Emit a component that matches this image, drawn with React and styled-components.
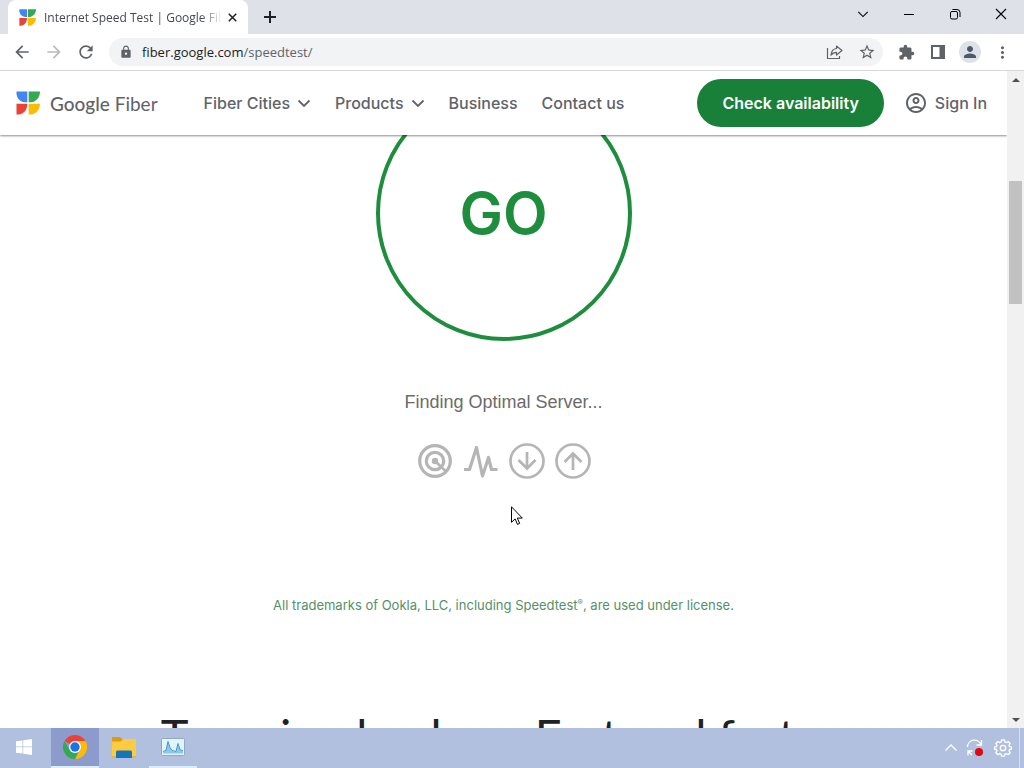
import React from "react";
import styled, { createGlobalStyle, css } from "styled-components";
import {
  MdArrowBack,
  MdArrowForward,
  MdRefresh,
  MdLock,
  MdStarBorder,
  MdExtension,
  MdMoreVert,
  MdPerson,
  MdOutlineAccountCircle,
} from "react-icons/md";

const FiberLogo = ({ size }) => (
  <svg width={size} height={size} viewBox="0 0 24 24" aria-hidden="true">
    <path fill="#4285f4" d="M.5.5h10.800v10.800H8.500C3.500 10.500 1 7 .5 3z" />
    <path fill="#34a853" d="M12.700.5H24c0 5.500-3.500 10.300-9 10.800h-2.300z" />
    <path fill="#ea4335" d="M.5 12.700h10.800c0 6-3.500 10.300-8.800 10.800h-2z" />
    <path fill="#fbbc04" d="M12.700 12.700H24c-.3 6-3.800 10.300-9.300 10.800h-2z" />
  </svg>
);

const ChevronIcon = ({ size = 14, stroke = 1.8 }) => (
  <svg width={size} height={size} viewBox="0 0 14 14" fill="none" stroke="currentColor" strokeWidth={stroke} aria-hidden="true">
    <path d="M1.500 4.500 7 10l5.500-5.500" />
  </svg>
);

const CloseIcon = ({ size, stroke }) => (
  <svg width={size} height={size} viewBox="0 0 12 12" fill="none" stroke="currentColor" strokeWidth={stroke} aria-hidden="true">
    <path d="M1 1l10 10M11 1 1 11" />
  </svg>
);

const PlusIcon = () => (
  <svg width="12" height="12" viewBox="0 0 12 12" fill="none" stroke="currentColor" strokeWidth="2" aria-hidden="true">
    <path d="M6 0v12M0 6h12" />
  </svg>
);

const MinimizeIcon = () => (
  <svg width="12" height="12" viewBox="0 0 12 12" stroke="currentColor" aria-hidden="true">
    <path d="M1 6.500h10" />
  </svg>
);

const RestoreIcon = () => (
  <svg width="12" height="12" viewBox="0 0 12 12" fill="none" stroke="currentColor" aria-hidden="true">
    <rect x="1.500" y="3.500" width="7" height="7.500" rx="1.500" />
    <path d="M3.500 1.500H8a3 3 0 0 1 3 3v4.500" />
  </svg>
);

const ShareIcon = () => (
  <svg width="18" height="18" viewBox="0 0 18 18" fill="none" stroke="currentColor" strokeWidth="1.200" aria-hidden="true">
    <path d="M1.500 5v10.500h12V13" />
    <path strokeLinejoin="round" d="M10.500 3 16 7.500 10.500 12V9.400C7.800 9.400 6.200 10.300 5 12.200c.3-3.600 2-6.300 5.500-6.700z" />
  </svg>
);

const SidePanelIcon = () => (
  <svg width="16" height="16" viewBox="0 0 16 16" aria-hidden="true">
    <path fill="currentColor" fillRule="evenodd" d="M1 1h14v14H1zM3 3v10h6.500V3z" />
  </svg>
);

const ServerIcon = () => (
  <svg width="36" height="36" viewBox="0 0 36 36" fill="none" stroke="currentColor" aria-hidden="true">
    <circle cx="18" cy="18" r="15.300" strokeWidth="3.200" />
    <circle cx="18" cy="18" r="8.700" strokeWidth="3.200" />
    <circle cx="18" cy="18" r="3.200" fill="currentColor" stroke="none" />
    <path d="M18 18l11 10.500" strokeWidth="2.600" />
  </svg>
);

const PingIcon = () => (
  <svg width="36" height="36" viewBox="0 0 36 36" fill="none" stroke="currentColor" strokeWidth="3.200" strokeLinejoin="round" aria-hidden="true">
    <path d="M1 26.500h5.500L13.500 4.500l6 28.500 6-18.500 3 12h6" />
  </svg>
);

const TransferIcon = ({ up }) => (
  <svg width="36" height="36" viewBox="0 0 36 36" fill="none" stroke="currentColor" strokeWidth="2.700" aria-hidden="true">
    <circle cx="18" cy="18" r="16.500" />
    {up ? <path d="M18 27V11M9.500 19 18 10.500l8.500 8.500" /> : <path d="M18 9v16M9.500 17l8.500 8.500 8.500-8.500" />}
  </svg>
);

const PointerIcon = () => (
  <svg width="12" height="19" viewBox="0 0 12 19" aria-hidden="true">
    <path fill="#fff" stroke="#000" d="M.5.8v15.500l3.600-3.400 2.400 5.500 2.200-1-2.400-5.300h5z" />
  </svg>
);

const WindowsIcon = () => (
  <svg width="16" height="16" viewBox="0 0 16 16" fill="#fff" aria-hidden="true">
    <path d="M0 2.300 6.500 1.400v6.200H0zM7.200 1.300 16 0v7.600H7.200zM0 8.300h6.500v6.300L0 13.700zM7.200 8.300H16V16l-8.800-1.300z" />
  </svg>
);

const ChromeIcon = () => (
  <svg width="24" height="24" viewBox="0 0 24 24" aria-hidden="true">
    <path fill="#ea4335" d="M12 12 1.600 6a12 12 0 0 1 20.800 0z" />
    <path fill="#fbbc04" d="M12 6h10.400A12 12 0 0 1 12 24l5.200-9z" />
    <path fill="#34a853" d="M1.600 6l5.200 9 5.200 3 3-.8L12 24A12 12 0 0 1 1.600 6z" />
    <circle cx="12" cy="12" r="6" fill="#fff" />
    <circle cx="12" cy="12" r="4.700" fill="#1a73e8" />
  </svg>
);

const FolderIcon = () => (
  <svg width="26" height="24" viewBox="0 0 26 24" aria-hidden="true">
    <path fill="#dc9a12" d="M1 3a1 1 0 0 1 1-1h7l2 2h4v3H1z" />
    <path fill="#fccb3f" d="M1 6.500h9L12 4h12a1 1 0 0 1 1 1v17a1 1 0 0 1-1 1H2a1 1 0 0 1-1-1z" />
    <path fill="#f0b429" d="M1 21h24v1a1 1 0 0 1-1 1H2a1 1 0 0 1-1-1z" />
    <path fill="#1475bd" d="M5 23v-6a1.500 1.500 0 0 1 1.500-1.500h13A1.500 1.500 0 0 1 21 17v6z" />
  </svg>
);

const MonitorIcon = () => (
  <svg width="24" height="20" viewBox="0 0 24 20" aria-hidden="true">
    <rect x=".5" y="1.500" width="23" height="17" rx="1" fill="#e3f3fa" stroke="#8fa9bf" />
    <path fill="#8cc8ea" d="M2 15.500 5 14 7 5l2 6 2 3 4 1 2-8 2 6 3 1.500v2H2z" />
    <path fill="none" stroke="#3f96cb" d="M2 14.500 5 13.500 7 4.500l2 6 2 3 4 1 2-8 2 6 3 1.500" />
  </svg>
);

const UpdateIcon = () => (
  <svg width="18" height="18" viewBox="0 0 18 18" fill="none" stroke="#fff" strokeWidth="1.300" aria-hidden="true">
    <path d="M1.500 8A7 7 0 0 1 15 5.500M15.500 1v5h-5M2 16.500v-4.500h4.500M2.500 12.500 6 16" />
    <circle cx="13" cy="13" r="4" fill="#e30613" stroke="none" />
  </svg>
);

const SettingsIcon = () => (
  <svg width="18" height="18" viewBox="0 0 18 18" fill="none" stroke="#fff" strokeWidth="1.300" aria-hidden="true">
    <path
      strokeLinejoin="round"
      d="M7.600 1h2.800l.5 2 1.400.6 1.800-1.100 2 2-1.100 1.800.6 1.400 2 .5v1.800l-2 .5-.6 1.400 1.100 1.800-2 2-1.800-1.100-1.400.6-.5 2H7.600l-.5-2-1.400-.6-1.800 1.100-2-2L3 11.900l-.6-1.400-2-.5V8.200l2-.5L3 6.300 1.900 4.500l2-2 1.800 1.100L7.100 3z"
    />
    <circle cx="9" cy="9" r="2.700" />
  </svg>
);

const NAV_ITEMS = [
  { label: "Fiber Cities", menu: true },
  { label: "Products", menu: true },
  { label: "Business" },
  { label: "Contact us" },
];

const App = () => {
  return (
    <>
      <GlobalStyle />
      <Desktop>
        <TabStrip>
          <Tab>
            <FiberLogo size={17} />
            <TabTitle>Internet Speed Test | Google Fiber</TabTitle>
            <TabClose aria-label="Close tab">
              <CloseIcon size={9} stroke={2} />
            </TabClose>
          </Tab>
          <NewTab aria-label="New tab">
            <PlusIcon />
          </NewTab>
          <WindowControls>
            <WindowButton aria-label="Search tabs">
              <ChevronIcon size={12} stroke={1.3} />
            </WindowButton>
            <WindowButton aria-label="Minimize">
              <MinimizeIcon />
            </WindowButton>
            <WindowButton aria-label="Restore">
              <RestoreIcon />
            </WindowButton>
            <WindowButton aria-label="Close">
              <CloseIcon size={12} stroke={1.1} />
            </WindowButton>
          </WindowControls>
        </TabStrip>

        <Toolbar>
          <ToolButton aria-label="Back">
            <MdArrowBack size={20} />
          </ToolButton>
          <ToolButton aria-label="Forward" disabled>
            <MdArrowForward size={20} />
          </ToolButton>
          <ToolButton aria-label="Reload">
            <MdRefresh size={20} />
          </ToolButton>
          <AddressBar>
            <MdLock size={14} />
            <Address>
              fiber.google.com<span>/speedtest/</span>
            </Address>
            <ToolButton aria-label="Share">
              <ShareIcon />
            </ToolButton>
            <ToolButton aria-label="Bookmark">
              <MdStarBorder size={18} />
            </ToolButton>
          </AddressBar>
          <ToolButton aria-label="Extensions">
            <MdExtension size={17} />
          </ToolButton>
          <ToolButton aria-label="Side panel">
            <SidePanelIcon />
          </ToolButton>
          <ToolButton aria-label="Profile">
            <Avatar>
              <MdPerson size={18} />
            </Avatar>
          </ToolButton>
          <ToolButton aria-label="Menu">
            <MdMoreVert size={19} />
          </ToolButton>
        </Toolbar>

        <Viewport>
          <Page>
            <SiteHeader>
              <Brand href="#">
                <FiberLogo size={24} />
                <span>
                  <b>Google</b> Fiber
                </span>
              </Brand>
              <Nav>
                {NAV_ITEMS.map((item) => (
                  <NavLink key={item.label} href="#">
                    {item.label}
                    {item.menu && <ChevronIcon />}
                  </NavLink>
                ))}
              </Nav>
              <CheckButton>Check availability</CheckButton>
              <NavLink href="#">
                <MdOutlineAccountCircle size={24} />
                Sign In
              </NavLink>
            </SiteHeader>
            <Main>
              <GoButton>GO</GoButton>
              <Status>Finding Optimal Server...</Status>
              <Steps>
                <ServerIcon />
                <PingIcon />
                <TransferIcon />
                <TransferIcon up />
              </Steps>
              <Legal>
                All trademarks of Ookla, LLC, including Speedtest<sup>®</sup>, are used under license.
              </Legal>
              <Heading>Two simple plans. Fast and faster.</Heading>
              <Pointer>
                <PointerIcon />
              </Pointer>
            </Main>
          </Page>
          <Scrollbar>
            <ScrollArrow aria-label="Scroll up" $up />
            <ScrollTrack>
              <ScrollThumb />
            </ScrollTrack>
            <ScrollArrow aria-label="Scroll down" />
          </Scrollbar>
        </Viewport>

        <Taskbar>
          <TaskButton aria-label="Start">
            <WindowsIcon />
          </TaskButton>
          <TaskButton aria-label="Chrome" $open $active>
            <ChromeIcon />
          </TaskButton>
          <TaskButton aria-label="File Explorer">
            <FolderIcon />
          </TaskButton>
          <TaskButton aria-label="Resource Monitor" $open>
            <MonitorIcon />
          </TaskButton>
          <Tray>
            <TrayButton aria-label="Show hidden icons" $flip>
              <ChevronIcon size={14} stroke={1.3} />
            </TrayButton>
            <TrayButton aria-label="Updates">
              <UpdateIcon />
            </TrayButton>
            <TrayButton aria-label="Settings">
              <SettingsIcon />
            </TrayButton>
          </Tray>
        </Taskbar>
      </Desktop>
    </>
  );
};

const GlobalStyle = createGlobalStyle`
  *, *::before, *::after {
    box-sizing: border-box;
  }

  body {
    margin: 0;
    background: #fff;
    font-family: Inter, "Liberation Sans", sans-serif;
  }

  button {
    padding: 0;
    border: none;
    background: none;
    color: inherit;
    font: inherit;
  }

  a {
    color: inherit;
    text-decoration: none;
  }

  svg {
    display: block;
    flex: none;
  }
`;

const Desktop = styled.div`
  display: flex;
  flex-direction: column;
  height: 100vh;
  overflow: hidden;
`;

const TabStrip = styled.div`
  display: flex;
  flex: none;
  height: 34px;
  padding-left: 8px;
  background: #dee1e8;
  color: #202124;
`;

const Tab = styled.div`
  display: flex;
  align-items: center;
  width: 240px;
  padding: 0 8px 0 11px;
  border-radius: 8px 8px 0 0;
  background: #fff;
  font-family: "Open Sans", "Noto Sans", sans-serif;
  font-size: 12px;
`;

const TabTitle = styled.span`
  flex: 1;
  min-width: 0;
  margin: 0 2px 0 8px;
  overflow: hidden;
  white-space: nowrap;
  color: #45484d;
  mask-image: linear-gradient(to right, #000 88%, transparent);
`;

const TabClose = styled.button`
  display: grid;
  place-items: center;
  width: 16px;
  height: 16px;
`;

const NewTab = styled.button`
  display: grid;
  place-items: center;
  width: 44px;
`;

const WindowControls = styled.div`
  display: flex;
  margin-left: auto;
`;

const WindowButton = styled.button`
  display: grid;
  place-items: center;
  width: 46px;
  height: 28px;
  color: #000;
`;

const Toolbar = styled.div`
  display: flex;
  flex: none;
  align-items: center;
  height: 37px;
  padding: 0 6px;
  border-bottom: 1px solid #d5d7da;
  background: #fff;
  color: #5f6368;
`;

const ToolButton = styled.button`
  display: grid;
  place-items: center;
  width: 32px;
  height: 28px;

  &:disabled {
    color: #b9bbbe;
  }
`;

const AddressBar = styled.div`
  display: flex;
  flex: 1;
  align-items: center;
  height: 28px;
  margin: 0 7px;
  padding-left: 10px;
  border-radius: 14px;
  background: #f1f3f4;
`;

const Address = styled.div`
  flex: 1;
  margin-left: 9px;
  font-family: "Open Sans", "Noto Sans", sans-serif;
  font-size: 13px;
  color: #202124;

  span {
    color: #5f6368;
  }
`;

const Avatar = styled.span`
  display: grid;
  place-items: center;
  width: 22px;
  height: 22px;
  border-radius: 50%;
  background: #dee1e8;
  color: #4d5969;
`;

const Viewport = styled.div`
  display: flex;
  flex: 1;
  min-height: 0;
`;

/* The header and the scrolled content share one cell, the header on top. */
const Page = styled.div`
  display: grid;
  flex: 1;
  overflow: hidden;

  > * {
    grid-area: 1 / 1;
  }
`;

const SiteHeader = styled.header`
  display: flex;
  z-index: 1;
  align-items: center;
  align-self: start;
  height: 64px;
  padding: 0 20px 0 16px;
  background: #fff;
  box-shadow: 0 1px 2px rgba(0, 0, 0, 0.45);
  color: #5f6368;
`;

const Brand = styled.a`
  display: flex;
  align-items: center;
  gap: 10px;
  font-family: Lato, sans-serif;
  font-size: 19px;

  b {
    font-weight: 500;
  }
`;

const Nav = styled.nav`
  display: flex;
  flex: 1;
  gap: 24px;
  margin-left: 46px;
`;

const NavLink = styled.a`
  display: flex;
  align-items: center;
  gap: 7px;
  font-size: 16px;
  font-weight: 500;
  white-space: nowrap;
`;

const CheckButton = styled.button`
  height: 48px;
  margin-right: 20px;
  padding: 0 25px;
  border-radius: 24px;
  background: #188038;
  color: #fff;
  font-size: 16px;
  font-weight: 600;
`;

const Main = styled.main`
  display: flex;
  position: relative;
  flex-direction: column;
  align-items: center;
  min-height: 0;
  padding-top: 14px;
`;

const GoButton = styled.button`
  flex: none;
  width: 256px;
  height: 256px;
  border: 4px solid #1e8e3e;
  border-radius: 50%;
  color: #1e8e3e;
  font-size: 58px;
  font-weight: 600;
`;

const Status = styled.p`
  margin: 49px 0 0;
  color: #6b6b6b;
  font-family: "Liberation Sans", sans-serif;
  font-size: 18px;
  line-height: 24px;
`;

const Steps = styled.div`
  display: flex;
  gap: 10px;
  margin-top: 29px;
  color: #b5b5b5;
`;

const Legal = styled.p`
  margin: 116px 0 0;
  color: #55906a;
  font-size: 13px;
  line-height: 20px;
  white-space: nowrap;

  sup {
    font-size: 8px;
    line-height: 0;
  }
`;

const Heading = styled.h2`
  margin: 92px 0 0;
  color: #202124;
  font-family: Lato, sans-serif;
  font-size: 47px;
  font-weight: 400;
  line-height: 56px;
  white-space: nowrap;
`;

const Pointer = styled.div`
  position: absolute;
  top: 435px;
  left: calc(50% + 7px);
`;

const Scrollbar = styled.div`
  display: flex;
  flex-direction: column;
  width: 17px;
  background: #f1f1f1;
`;

const ScrollArrow = styled.button`
  display: grid;
  place-items: center;
  height: 17px;

  &::before {
    content: "";
    border: 4px solid transparent;
    border-top-width: 0;
    border-bottom-width: 4px;
    border-bottom-color: #505050;
    ${(props) => !props.$up && css`transform: rotate(180deg);`}
  }
`;

const ScrollTrack = styled.div`
  flex: 1;
  padding: 93px 2px 0;
`;

const ScrollThumb = styled.div`
  height: 123px;
  background: #c1c1c1;
`;

const Taskbar = styled.div`
  display: flex;
  flex: none;
  height: 40px;
  padding-right: 4px;
  background: #b1c0df;
  color: #fff;
`;

const TaskButton = styled.button`
  display: grid;
  place-items: center;
  width: 48px;
  margin-right: 1px;
  border-bottom: 2px solid transparent;
  ${(props) => props.$open && css`border-bottom-color: #dcebfd;`}
  ${(props) => props.$active && css`background: #8c9bcb;`}

  &:first-child {
    margin-right: 3px;
  }
`;

const Tray = styled.div`
  display: flex;
  margin-left: auto;
  padding-right: 2px;
  border-right: 1px solid #d3dcf0;
`;

const TrayButton = styled.button`
  display: grid;
  place-items: center;
  width: ${(props) => (props.$flip ? "20px" : "28px")};

  svg {
    ${(props) => props.$flip && css`transform: rotate(180deg);`}
  }
`;

export default App;
